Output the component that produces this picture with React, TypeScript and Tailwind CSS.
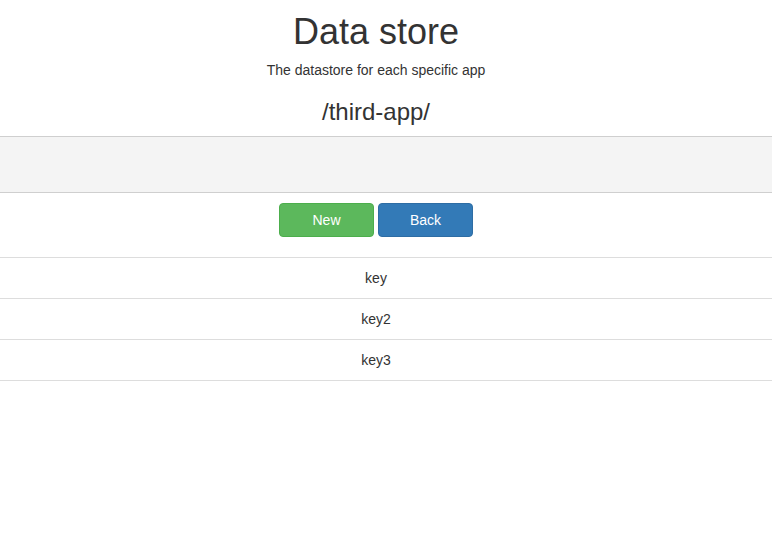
import React from 'react';

const keys = ['key', 'key2', 'key3'];

const App: React.FC = () => {
  return (
    <div
      className="min-h-[533px] bg-white text-[#333] text-center"
      style={{ fontFamily: '"Liberation Sans", Arial, sans-serif' }}
    >
      <div className="pr-[20px]">
        <h1 className="pt-[12px] text-[36px] leading-[39.6px] mb-[8px]">Data store</h1>
        <p className="text-[14px] leading-[20px]">The datastore for each specific app</p>
        <h3 className="mt-[19px] text-[24px] leading-[26.4px]">/third-app/</h3>
      </div>

      <div className="mt-[11px] h-[57px] bg-[#f4f4f4] border-y border-[#cfcfcf]" />

      <div className="flex justify-center gap-[4px] pt-[10px] pb-[20px] pr-[20px]">
        <button className="w-[95px] h-[34px] rounded-[4px] border border-[#4cae4c] bg-[#5cb85c] text-white text-[14px]">
          New
        </button>
        <button className="w-[95px] h-[34px] rounded-[4px] border border-[#2e6da4] bg-[#337ab7] text-white text-[14px]">
          Back
        </button>
      </div>

      <div className="border-t border-[#ddd]">
        {keys.map((k) => (
          <div key={k} className="h-[41px] flex items-center justify-center border-b border-[#ddd] text-[14px] pr-[20px]">
            {k}
          </div>
        ))}
      </div>
    </div>
  );
};

export default App;
